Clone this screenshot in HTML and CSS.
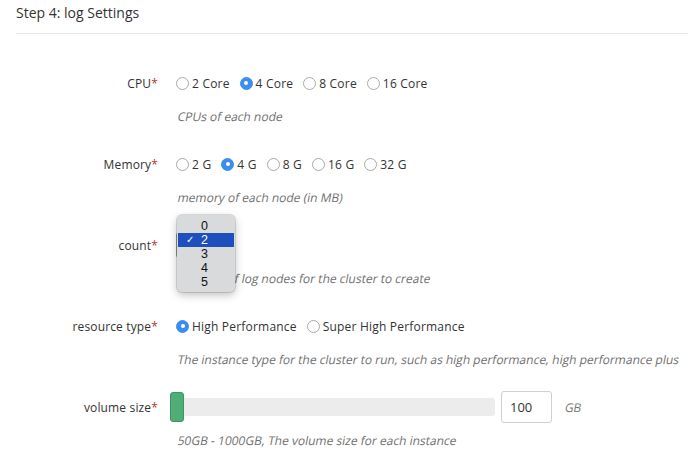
FILE: index.html
```html
<!DOCTYPE html>
<html>
<head>
<meta charset="utf-8">
<link rel="stylesheet" href="styles.css">
</head>
<body>
<div class="page">
  <h3 class="step-title">Step 4: log Settings</h3>
  <div class="form">
    <div class="group">
      <div class="row">
        <label class="label">CPU<span class="req">*</span></label>
        <div class="control radios">
          <span class="radio"><i class="dot"></i>2 Core</span>
          <span class="radio checked"><i class="dot"></i>4 Core</span>
          <span class="radio"><i class="dot"></i>8 Core</span>
          <span class="radio"><i class="dot"></i>16 Core</span>
        </div>
      </div>
      <div class="help"><span>CPUs of each node</span></div>
    </div>

    <div class="group">
      <div class="row">
        <label class="label">Memory<span class="req">*</span></label>
        <div class="control radios">
          <span class="radio"><i class="dot"></i>2 G</span>
          <span class="radio checked"><i class="dot"></i>4 G</span>
          <span class="radio"><i class="dot"></i>8 G</span>
          <span class="radio"><i class="dot"></i>16 G</span>
          <span class="radio"><i class="dot"></i>32 G</span>
        </div>
      </div>
      <div class="help"><span>memory of each node (in MB)</span></div>
    </div>

    <div class="group">
      <div class="row">
        <label class="label">count<span class="req">*</span></label>
        <div class="control">
          <div class="select-wrap">
            <div class="select"></div>
            <ul class="popup">
              <li>0</li>
              <li class="sel"><span class="check">&#10003;</span>2</li>
              <li>3</li>
              <li>4</li>
              <li>5</li>
            </ul>
          </div>
        </div>
      </div>
      <div class="help"><span>Number of log nodes for the cluster to create</span></div>
    </div>

    <div class="group">
      <div class="row">
        <label class="label">resource type<span class="req">*</span></label>
        <div class="control radios">
          <span class="radio checked"><i class="dot"></i>High Performance</span>
          <span class="radio"><i class="dot"></i>Super High Performance</span>
        </div>
      </div>
      <div class="help"><span>The instance type for the cluster to run, such as high performance, high performance plus</span></div>
    </div>

    <div class="group">
      <div class="row">
        <label class="label">volume size<span class="req">*</span></label>
        <div class="control slider-line">
          <div class="track"><span class="handle"></span></div>
          <div class="num-input">100</div>
          <span class="unit">GB</span>
        </div>
      </div>
      <div class="help"><span>50GB - 1000GB, The volume size for each instance</span></div>
    </div>
  </div>
</div>
</body>
</html>
```

FILE: styles.css
```css
html, body {
  margin: 0;
  padding: 0;
  background: #fff;
}
body {
  font-family: "Open Sans", "DejaVu Sans", sans-serif;
  font-size: 12px;
  color: #333;
}
.page {
  width: 688px;
  height: 465px;
  overflow: hidden;
}
.step-title {
  margin: 0 0 0 16px;
  padding: 3px 0 10px 0;
  font-size: 14px;
  font-weight: 400;
  line-height: 20px;
  color: #333;
  border-bottom: 1px solid #e8e8e8;
}
.form {
  margin-top: 33px;
}
.group {
  margin-bottom: 22px;
}
.row {
  display: flex;
  align-items: center;
  height: 32px;
}
.label {
  width: 158px;
  text-align: right;
  flex: none;
  color: #333;
  letter-spacing: 0.15px;
}
.req {
  color: #b03a2e;
}
.control {
  margin-left: 18px;
  display: flex;
  align-items: center;
}
.radios {
  gap: 10px;
}
.radio {
  display: inline-flex;
  align-items: center;
  color: #333;
  letter-spacing: 0.2px;
}
.radio .dot {
  width: 11px;
  height: 11px;
  border: 1px solid #a9a9a9;
  border-radius: 50%;
  background: #fff;
  margin-right: 3px;
  display: inline-flex;
  align-items: center;
  justify-content: center;
  box-sizing: content-box;
}
.radio.checked .dot {
  background: #3b8ef0;
  border-color: #3b8ef0;
}
.radio.checked .dot::after {
  content: "";
  width: 4px;
  height: 4px;
  border-radius: 50%;
  background: #fff;
}
.help {
  margin: 9px 0 0 176px;
  line-height: 18px;
  color: #6f6f6f;
  white-space: nowrap;
}
.help span {
  display: inline-block;
  transform: skewX(-11deg);
  transform-origin: 0 100%;
}
.select-wrap {
  position: relative;
  width: 58px;
  height: 28px;
}
.select {
  width: 56px;
  height: 26px;
  border: 1px solid #999;
  border-radius: 4px;
  background: #eee;
}
.popup {
  position: absolute;
  z-index: 10;
  left: 1px;
  top: -16px;
  width: 58px;
  margin: 0;
  padding: 4px 0 3px 0;
  list-style: none;
  background: #d9dadc;
  border-radius: 5px;
  box-shadow: 0 0 0 1px rgba(0,0,0,0.12), 0 3px 8px rgba(0,0,0,0.25);
  font-family: "Liberation Sans", Arial, sans-serif;
  font-size: 12.5px;
  color: #111;
}
.popup li {
  position: relative;
  height: 14px;
  line-height: 14px;
  padding-left: 24px;
}
.popup li.sel {
  background: #1e4fbd;
  color: #fff;
  margin: 0 1px;
  padding-left: 23px;
}
.check {
  position: absolute;
  left: 8px;
  top: 0;
  font-size: 10px;
  font-family: "DejaVu Sans", sans-serif;
}
.slider-line {
  flex: none;
}
.track {
  position: relative;
  width: 319px;
  height: 18px;
  background: #ececec;
  border-radius: 3px;
}
.handle {
  position: absolute;
  left: -6px;
  top: -6px;
  width: 12px;
  height: 28px;
  background: #4fae77;
  border: 1px solid #3e9463;
  border-radius: 3px;
}
.num-input {
  margin-left: 6px;
  width: 41px;
  height: 30px;
  line-height: 30px;
  padding-left: 8px;
  border: 1px solid #cfcfd4;
  border-radius: 3px;
  font-size: 13px;
  color: #333;
}
.unit {
  margin-left: 13px;
  color: #777;
  display: inline-block;
  transform: skewX(-11deg);
}
```
